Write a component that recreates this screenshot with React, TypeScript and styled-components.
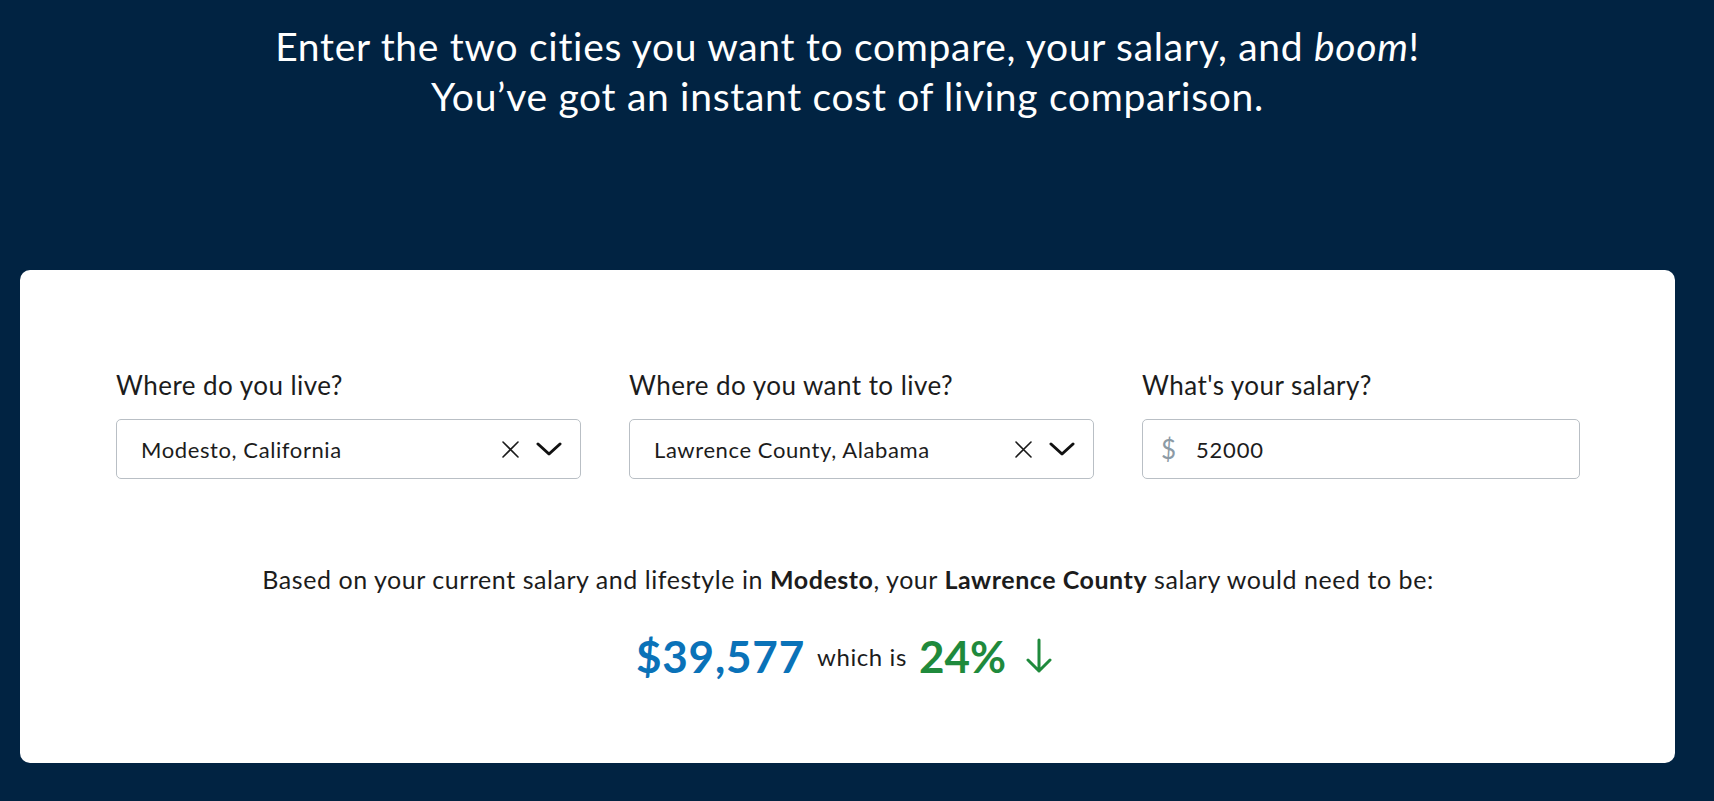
import styled, { createGlobalStyle } from "styled-components";

const GlobalStyle = createGlobalStyle`
  html, body {
    margin: 0;
    padding: 0;
    background-color: #012342;
  }

  body {
    font-family: Lato, "Open Sans", sans-serif;
    font-variant-ligatures: none;
    -webkit-font-smoothing: antialiased;
  }

  * {
    box-sizing: border-box;
  }
`;

type CityFieldProps = {
  label: string;
  value: string;
};

function CityField ({ label, value }: CityFieldProps) {
  return (
    <Field>
      <Label>{label}</Label>
      <Select role="button">
        <SelectValue>{value}</SelectValue>
        <Controls>
          <IconButton aria-label="Clear">
            <svg width="19" height="19" viewBox="0 0 19 19" fill="none">
              <path d="M2 2L17 17M17 2L2 17" stroke="#1a1a1a" strokeWidth="1.6" strokeLinecap="round" />
            </svg>
          </IconButton>
          <IconButton aria-label="Open">
            <svg width="26" height="14" viewBox="0 0 26 14" fill="none">
              <path d="M2 2L13 12L24 2" stroke="#111" strokeWidth="3" strokeLinecap="round" strokeLinejoin="round" />
            </svg>
          </IconButton>
        </Controls>
      </Select>
    </Field>
  );
}

export default function App () {
  const salary = 52000;
  const target = 39577;
  const change = Math.round((1 - target / salary) * 100);

  return (
    <>
      <GlobalStyle />
      <Page>
        <Intro>
          Enter the two cities you want to compare, your salary, and <em>boom</em>!
          <br />
          You’ve got an instant cost of living comparison.
        </Intro>

        <Card>
          <Fields>
            <CityField label="Where do you live?" value="Modesto, California" />
            <CityField label="Where do you want to live?" value="Lawrence County, Alabama" />
            <Field>
              <Label>What's your salary?</Label>
              <SalaryBox>
                <Currency>$</Currency>
                <SalaryInput defaultValue={salary} />
              </SalaryBox>
            </Field>
          </Fields>

          <Summary>
            Based on your current salary and lifestyle in <strong>Modesto</strong>, your{" "}
            <strong>Lawrence County</strong> salary would need to be:
          </Summary>

          <Result>
            <Amount>${target.toLocaleString("en-US")}</Amount>
            <Small>which is</Small>
            <Percent>{change}%</Percent>
            <svg width="26" height="36" viewBox="0 0 26 36" fill="none">
              <path d="M13 2V33M2 22L13 33L24 22" stroke="#1f8a3c" strokeWidth="3" strokeLinecap="round" strokeLinejoin="round" />
            </svg>
          </Result>
        </Card>
      </Page>
    </>
  );
}

const Page = styled.div`
  width: 1655px;
  margin-left: 20px;
  padding-top: 21px;
  display: flex;
  flex-direction: column;
  align-items: center;
`;

const Intro = styled.h1`
  margin: 0;
  color: #ffffff;
  font-size: 39px;
  font-weight: 400;
  letter-spacing: 0.7px;
  line-height: 50px;
  text-align: center;

  em {
    font-style: italic;
  }
`;

const Card = styled.section`
  margin-top: 149px;
  width: 100%;
  background-color: #ffffff;
  border-radius: 10px;
  padding: 100px 95px 82px 96px;
  display: flex;
  flex-direction: column;
  align-items: center;
`;

const Fields = styled.div`
  width: 100%;
  display: grid;
  grid-template-columns: 465px 465px 1fr;
  gap: 48px;
`;

const Field = styled.div`
  display: flex;
  flex-direction: column;
`;

const Label = styled.label`
  font-size: 26px;
  letter-spacing: 0.45px;
  line-height: 30px;
  color: #1c1c1c;
  margin-bottom: 19px;
`;

const Select = styled.div`
  display: flex;
  align-items: center;
  justify-content: space-between;
  height: 60px;
  padding: 0 18px 0 24px;
  border: 1px solid #b9bfc5;
  border-radius: 5px;
  cursor: pointer;
  background-color: #ffffff;
`;

const SelectValue = styled.span`
  font-size: 22px;
  letter-spacing: 0.6px;
  color: #1c1c1c;
`;

const Controls = styled.div`
  display: flex;
  align-items: center;
  gap: 16px;
`;

const IconButton = styled.span`
  display: flex;
  align-items: center;
`;

const SalaryBox = styled.div`
  display: flex;
  align-items: center;
  height: 60px;
  padding: 0 18px;
  border: 1px solid #b9bfc5;
  border-radius: 5px;
`;

const Currency = styled.span`
  font-size: 26px;
  color: #8c9aa5;
  width: 35px;
`;

const SalaryInput = styled.input`
  border: none;
  outline: none;
  flex: 1;
  font-family: inherit;
  font-size: 22px;
  letter-spacing: 0.8px;
  color: #1c1c1c;
  padding: 0;
`;

const Summary = styled.p`
  margin: 85px 0 0;
  font-size: 25px;
  letter-spacing: 0.55px;
  line-height: 30px;
  color: #1c1c1c;
  text-align: center;

  strong {
    font-weight: 700;
  }
`;

const Result = styled.div`
  margin-top: 37px;
  height: 50px;
  display: flex;
  align-items: center;
  gap: 12px;
  margin-right: 8px;
`;

const Amount = styled.span`
  font-size: 44px;
  font-weight: 700;
  letter-spacing: 0.8px;
  color: #0a72b8;
`;

const Small = styled.span`
  font-size: 24px;
  letter-spacing: 0.6px;
  color: #1c1c1c;
`;

const Percent = styled.span`
  font-size: 44px;
  font-weight: 700;
  color: #1f8a3c;
  margin-right: 8px;
`;
